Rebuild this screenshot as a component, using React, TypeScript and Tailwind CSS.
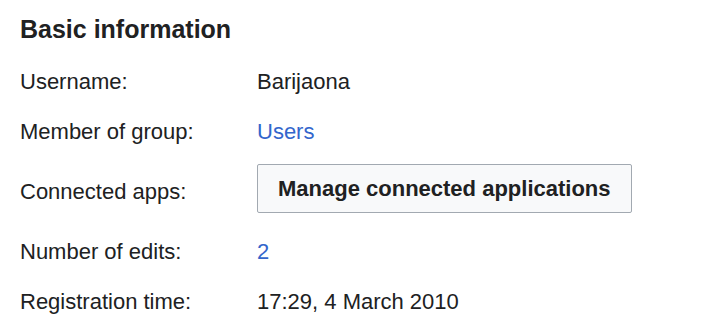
const rows: { label: string; value: React.ReactNode; tall?: boolean }[] = [
  { label: "Username:", value: <span>Barijaona</span> },
  { label: "Member of group:", value: <a href="#" className="text-[#3366cc]">Users</a> },
  {
    label: "Connected apps:",
    tall: true,
    value: (
      <button className="h-[49px] rounded-[2px] border border-[#a2a9b1] bg-[#f8f9fa] px-[20px] font-bold leading-none text-[#202122] -mt-[5px]">
        Manage connected applications
      </button>
    ),
  },
  { label: "Number of edits:", value: <a href="#" className="text-[#3366cc]">2</a> },
  { label: "Registration time:", value: <span>17:29, 4 March 2010</span> },
];

export default function App() {
  return (
    <div className="min-h-[328px] w-[703px] bg-white pl-[20px] pt-[14px] text-[#202122]" style={{ fontFamily: '"Liberation Sans", Arial, sans-serif' }}>
      <h2 className="text-[25px] font-bold leading-[1.25]">Basic information</h2>
      <div className="mt-[11px]">
        {rows.map((r) => (
          <div key={r.label} className={`flex items-center text-[22px] ${r.tall ? "h-[70px]" : "h-[50px]"}`}>
            <div className="w-[237px] shrink-0">{r.label}</div>
            <div>{r.value}</div>
          </div>
        ))}
      </div>
    </div>
  );
}
